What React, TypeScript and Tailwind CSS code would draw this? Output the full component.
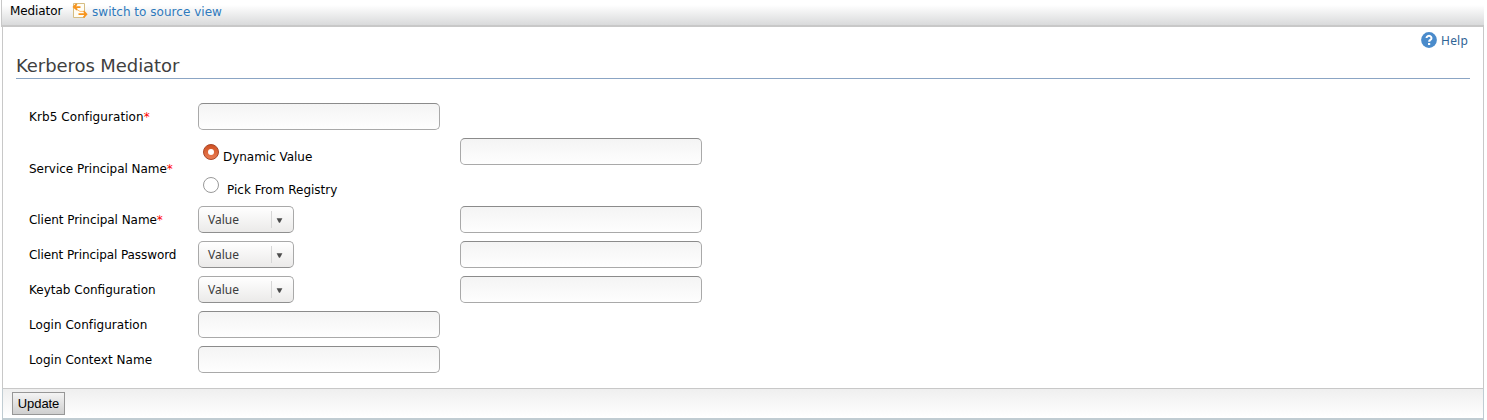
import React from "react";

const inputClass =
  "block h-[27px] w-[242px] rounded-[5px] border border-[#a9a9a9] border-t-[#8b8b8b] bg-linear-to-b from-[#f4f4f4] to-[#fefefe] px-2 text-[12px] outline-none";

function TextField({ label }: { label: string }) {
  return <input type="text" aria-label={label} className={inputClass} />;
}

function ValueSelect() {
  return (
    <button
      type="button"
      className="flex h-[27px] w-24 items-center rounded-[5px] border border-[#a9a9a9] border-b-[#8f8f8f] bg-linear-to-b from-white to-[#ebeae9] pl-[9px] font-['Noto_Sans',sans-serif] text-[12px] text-[#3c3c3c]"
    >
      <span className="w-[63px] text-left">Value</span>
      <span className="h-[17px] w-px bg-[#d6d6d6]" />
      <svg className="ml-1 mt-px" width="7" height="5" viewBox="0 0 7 5">
        <path d="M0.6 0.3h5.8L4 4.7H3z" fill="#4c4c4c" />
      </svg>
    </button>
  );
}

function Radio({ checked = false }: { checked?: boolean }) {
  return (
    <svg width="16" height="16" viewBox="0 0 16 16">
      <defs>
        <linearGradient id="radioFill" x1="0" y1="0" x2="0" y2="1">
          <stop offset="0" stopColor="#cf4f20" />
          <stop offset="1" stopColor="#ea7f56" />
        </linearGradient>
      </defs>
      <circle
        cx="8"
        cy="8"
        r="7.5"
        fill={checked ? "url(#radioFill)" : "#fff"}
        stroke={checked ? "#a9482a" : "#999"}
      />
      {checked && <circle cx="8" cy="8" r="3" fill="#fff" />}
    </svg>
  );
}

type LabelProps = { text: string; required?: boolean; spacing?: string };

function Label({ text, required = false, spacing = "tracking-normal" }: LabelProps) {
  return (
    <span className={`w-[169px] shrink-0 whitespace-nowrap pt-0.5 ${spacing}`}>
      {text}
      {required && <span className="text-[#ff0000]">*</span>}
    </span>
  );
}

function SimpleRow(props: LabelProps) {
  return (
    <div className="flex h-[35px] items-center">
      <Label {...props} />
      <TextField label={props.text} />
    </div>
  );
}

function SelectRow(props: LabelProps) {
  return (
    <div className="flex h-[35px] items-center">
      <Label {...props} />
      <div className="w-[262px]">
        <ValueSelect />
      </div>
      <TextField label={props.text} />
    </div>
  );
}

export default function App() {
  return (
    <div className="flex h-[420px] w-[1487px] flex-col overflow-hidden bg-white font-['DejaVu_Sans',sans-serif] text-[12px] leading-[15px] text-black">
      <header className="ml-px flex h-[27px] w-[1483px] items-start border-b-2 border-l border-[#c8c8c8] bg-linear-to-b from-white from-20% to-[#d9dadb] pl-2">
        <span className="mt-1 tracking-[-0.1px]">Mediator</span>
        <a className="ml-[9.8px] flex items-start text-[#2f7abd]" href="#">
          <svg className="mt-[3px]" width="16" height="16" viewBox="0 0 16 16" fill="none">
            <path d="M1.5 .5h11v14h-11z" fill="#fffdf5" stroke="#d5bd83" />
            <path
              d="M4.8 1L1.8 4L5.2 6.8M2.5 4.1H8.5M11.5 8L14.4 11.2L11.5 14.5M13.5 11.2H6.5"
              stroke="#f7941d"
              strokeWidth="1.8"
            />
            <path d="M5 6.6L8 8.4H12" stroke="#f9ad4f" strokeWidth=".8" />
          </svg>
          <span className="ml-1 mt-[5px] tracking-[0.03px]">switch to source view</span>
        </a>
      </header>
      <main className="ml-[2px] flex h-[361px] w-[1482px] flex-col border-x border-[#c8c8c8] px-[13px]">
        <a className="mt-[5px] mr-[2px] flex h-4 items-center justify-end gap-1 font-['Noto_Sans',sans-serif] text-[#2f6495]" href="#">
          <svg width="16" height="16" viewBox="0 0 16 16">
            <circle cx="8" cy="8" r="7.9" fill="#4a8bcb" />
            <path d="M5.5 6a2.5 2.3 0 1 1 3.8 2Q8.1 8.6 8.1 9.8" fill="none" stroke="#fff" strokeWidth="2" />
            <path d="M7 11h2.2v2H7z" fill="#fff" />
          </svg>
          <span className="tracking-[0.2px]">Help</span>
        </a>
        <h1 className="mt-[7px] h-[24px] border-b border-[#8ba5c4] text-[18px] leading-[22px] tracking-[-0.07px] text-[#3f3f3f]">
          Kerberos Mediator
        </h1>
        <form className="mt-5 pl-[13px]">
          <SimpleRow text="Krb5 Configuration" required spacing="tracking-[0.08px]" />
          <div className="flex h-[68px] items-center">
            <Label text="Service Principal Name" required spacing="tracking-[-0.03px]" />
            <div className="flex h-full w-[262px] flex-col pl-[5px]">
              <div className="mt-[10px] flex h-[33px] items-start">
                <Radio checked />
                <span className="ml-1 mt-1.5 tracking-[-0.03px]">Dynamic Value</span>
              </div>
              <div className="flex items-start">
                <Radio />
                <span className="ml-2 mt-1.5">Pick From Registry</span>
              </div>
            </div>
            <div className="self-start pt-1">
              <TextField label="Service Principal Name" />
            </div>
          </div>
          <SelectRow text="Client Principal Name" required spacing="tracking-[-0.05px]" />
          <SelectRow text="Client Principal Password" spacing="tracking-[-0.09px]" />
          <SelectRow text="Keytab Configuration" />
          <SimpleRow text="Login Configuration" spacing="tracking-[0.04px]" />
          <SimpleRow text="Login Context Name" spacing="tracking-[0.04px]" />
        </form>
      </main>
      <footer className="ml-[2px] h-8 w-[1482px] border border-b-2 border-[#c0ccd2] border-t-[#c8c8c8] bg-linear-to-b from-[#efefef] to-white pl-[9px] pt-[3px]">
        <button
          type="button"
          className="block h-[23px] w-[53px] border border-[#979797] bg-linear-to-b from-[#f4f4f4] to-[#cfcfcf] font-['Liberation_Sans',sans-serif] text-[13px] leading-[21px] tracking-[-0.1px] text-black"
        >
          Update
        </button>
      </footer>
    </div>
  );
}
